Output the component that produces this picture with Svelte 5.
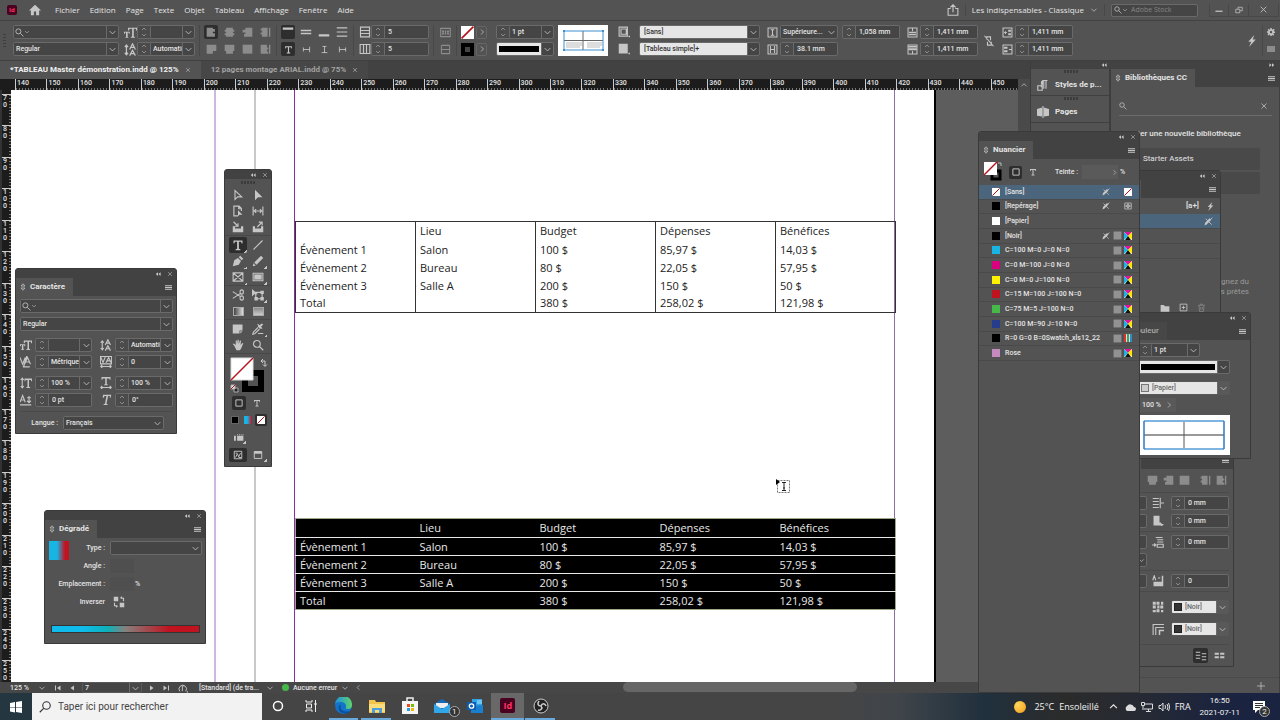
<script lang="ts">
  type Glyph = { f?: string; s?: string };

  const menus = ['Fichier', 'Edition', 'Page', 'Texte', 'Objet', 'Tableau', 'Affichage', 'Fenêtre', 'Aide'];
  const columns = ['', 'Lieu', 'Budget', 'Dépenses', 'Bénéfices'];
  const rows = [
    ['Évènement 1', 'Salon', '100 $', '85,97 $', '14,03 $'],
    ['Évènement 2', 'Bureau', '80 $', '22,05 $', '57,95 $'],
    ['Évènement 3', 'Salle A', '200 $', '150 $', '50 $'],
    ['Total', '', '380 $', '258,02 $', '121,98 $']
  ];
  const hRuler = Array.from({ length: 32 }, (_, i) => 140 + i * 10);
  const vRuler = Array.from({ length: 19 }, (_, i) => 70 + i * 10);

  const swatches = [
    { name: '[Sans]', color: 'none', locked: true, kind: 'none' },
    { name: '[Repérage]', color: '#000', locked: true, kind: 'reg' },
    { name: '[Papier]', color: '#fff', locked: false, kind: '' },
    { name: '[Noir]', color: '#000', locked: true, kind: 'cmyk' },
    { name: 'C=100 M=0 J=0 N=0', color: '#18b4e4', locked: false, kind: 'cmyk' },
    { name: 'C=0 M=100 J=0 N=0', color: '#d8007f', locked: false, kind: 'cmyk' },
    { name: 'C=0 M=0 J=100 N=0', color: '#fff200', locked: false, kind: 'cmyk' },
    { name: 'C=15 M=100 J=100 N=0', color: '#c1121f', locked: false, kind: 'cmyk' },
    { name: 'C=75 M=5 J=100 N=0', color: '#46b749', locked: false, kind: 'cmyk' },
    { name: 'C=100 M=90 J=10 N=0', color: '#263c8c', locked: false, kind: 'cmyk' },
    { name: 'R=0 G=0 B=0Swatch_xls12_22', color: '#000', locked: false, kind: 'rgb' },
    { name: 'Rose', color: '#c48abf', locked: false, kind: 'cmyk' }
  ];

  const toolGroups = [
    ['select', 'direct', 'page', 'gap', 'collect', 'place'],
    ['type', 'line', 'pen', 'pencil', 'frame', 'rect'],
    ['scissors', 'transform', 'gradient', 'feather'],
    ['note', 'dropper', 'hand', 'zoom']
  ];
  // tools that open a flyout carry a small corner mark
  const flyouts = ['type', 'pen', 'pencil', 'frame', 'rect', 'transform', 'dropper'];

  // all glyphs are drawn on a 16 x 16 grid: f = filled, s = stroked
  const glyphs: Record<string, Glyph> = {
    home: { f: 'M8 1 0 8.500h2.500V15h4v-5h3v5h4V8.500H16z' },
    share: { s: 'M5 6H1.500v9h13V6H11M8 11V1M4.500 4.500 8 1l3.500 3.500' },
    down: { s: 'M3 5.500 8 10.500l5-5' },
    up: { s: 'M3 10.500 8 5.500l5 5' },
    right: { s: 'M6 3l5 5-5 5' },
    left: { s: 'M10 3 5 8l5 5' },
    close: { s: 'M3 3l10 10M13 3 3 13' },
    minus: { s: 'M1 10h14M1 11h14' },
    restore: { s: 'M1.500 6.500h8v7h-8zM6 6V2.500h8.500v7H10' },
    collapse: { f: 'M8 3v10L2 8zM15 3v10L9 8z' },
    expand: { f: 'M1 3v10l6-5zM8 3v10l6-5z' },
    menu: { f: 'M0 3h16v2H0zM0 7h16v2H0zM0 11h16v2H0z' },
    updown: { s: 'M4 6 8 1.500 12 6zM4 10l4 4.500 4-4.500z' },
    search: { s: 'M10.500 6a4.500 4.500 0 1 1-9 0 4.500 4.500 0 0 1 9 0M9.500 9.500 15 15' },
    size: { f: 'M5 2h11v3.500h-1L14.500 3.500H12V13l1.500.5v1h-5v-1L10 13V3.500H7L6 5.500H5zM0 7h7v2.500H6L5.500 8H4.500v5.500l1 .5v.500h-4V14l1-.5V8H1.500L1 9.500H0z' },
    leading: { s: 'M3 3v11M1 5l2-2.500L5 5M1 12l2 2.500L5 12M7 8l3.500-7L14 8M8 5.500h5M7 15.500l3.500-6.500 3.500 6.500M8 13h5' },
    kern: { s: 'M0 2l3.500 9L7 2M6 11l4-9 4 9M7.500 8h5M9 0 5 13M4 14.500h9M6 12.500 4 14.500' },
    track: { s: 'M1 1.500l3 7 3-7M8 9l3.500-7L15 9M9.500 6.500h4M0 .500h16M0 10.500h16M.500 0v10M15.500 0v10M1 14h14M3 12l-2 2 2 2M13 12l2 2-2 2' },
    vscale: { s: 'M3 2v12M1 4l2-2.500L5 4M1 12l2 2.500L5 12', f: 'M6 2h10v3.500h-1l-.5-1.500H12v9l1.500.500v1h-5v-1L10 13V4H7.500L7 5.500H6z' },
    hscale: { f: 'M2 0h12v3.500h-1L12.500 2H9v7.500l1.500.5v1h-5v-1L7 9.500V2H3.500L3 3.500H2z', s: 'M1 14h14M3 12l-2 2 2 2M13 12l2 2-2 2' },
    baseline: { s: 'M0 11l3.500-9L7 11M1.500 8h4M0 14.500h15M12 2.500v9M9.500 9l2.500 2.500L14.500 9M9.500 5H14.500' },
    skew: { f: 'M4 1h11l-.8 4H13l.3-2.200H10.800L8.600 13l1.600.5-.2 1.200H4.600l.2-1.200L6.600 13 8.600 2.800H6L5 5H3.600z' },
    al: { f: 'M1 1h9v2h3v4h-3v2h3v5H1z' },
    ac: { f: 'M3 1h10v3h2v3h-2v2h2v3h-2v2H3v-2H1V9h2V7H1V4h2z' },
    ar: { f: 'M5 1h10v13H3v-4h2V8H1V4h4z' },
    ae: { f: 'M1 2h2v3h-2zM3 1h8v13H3v-3H1V8h2zM13 1h2v13h-2z' },
    jl: { f: 'M1 1h14v9h-5v4H1z' },
    jc: { f: 'M1 1h14v9h-2v4H3v-4H1z' },
    jf: { f: 'M1 1h14v13H1z' },
    je: { f: 'M1 1h9v4h2v3h-2v3h2v3H1zM13 1h2v13h-2z' },
    vt: { f: 'M1 2h14v3H1z' },
    vc: { f: 'M1 5h14v2H1zM1 9h14v2H1z' },
    vb: { f: 'M1 11h14v3H1z' },
    vj: { s: 'M1 2.500h14M1 8h14M1 13.500h14' },
    T: { f: 'M2 2h12v4h-1l-1-2.200H9V13l2 .5V15H5v-1.500l2-.5V3.800H4L3 6H2z' },
    tr: { s: 'M13.500 3v10M14 8H2M2.500 4.500v7' },
    tu: { s: 'M3 13.500h10M8 14V2M4.500 2.500h7' },
    tl: { s: 'M2.500 3v10M2 8h12M13.500 4.500v7' },
    rowsI: { s: 'M2 1.500h12v13H2zM2 6h12M2 10h12' },
    colsI: { s: 'M1.500 2h13v12h-13zM6 2v12M10 2v12' },
    merge: { s: 'M1 2h14v12H1zM3 5l3 6M6 5l-3 6M8 5v6M13 5l-3 6M10 5l3 6' },
    unmerge: { s: 'M2 2v12M14 2v12M2 8h12M2 2h12M2 14h12' },
    corner: { s: 'M1.500 1.500h11v12h-11zM4 4h7v7H4z', f: 'M14 13h2v2h-2z' },
    fill: { f: 'M1 1h12v13H1zM14 13h2v2h-2z' },
    rowH: { s: 'M1.500 1.500h13v13h-13zM8 4v8M5.500 4h5M5.500 12h5' },
    colW: { s: 'M1.500 1.500h13v13h-13zM5 3v10M11 3v10M5 8h6' },
    insetT: { s: 'M1.500 1.500h13v13h-13zM8 2v4', f: 'M3 7h10v2H3zM3 10h10v2H3z' },
    insetB: { s: 'M1.500 1.500h13v13h-13zM8 10v4', f: 'M2 3h12v2H2zM2 6h12v3H2z' },
    insetL: { s: 'M1.500 1.500h13v13h-13zM3 8h4M5 6v4', f: 'M9 4h4v3H9zM9 9h4v3H9z' },
    insetR: { s: 'M1.500 1.500h13v13h-13zM10 8h4', f: 'M3 4h5v3H3zM3 9h5v3H3z' },
    unlink: { s: 'M5 6V2.500h5V7M6 9v4.500h5V9M2 1l12 14' },
    bolt: { f: 'M11 0 3 9h4l-3 7 9-10H9z' },
    gear: { f: 'M6.500 0h3v2.500l2 .8 1.800-1.800 2 2L13.500 5.500l.5 1.500h2v3h-2.500l-.8 1.500 1.800 1.800-2 2-2-1.800-1 .5V16h-3v-2.500l-1.500-.5-2 1.800-2-2L2.500 11 2 9.500H0v-3h2.500L3 5 1.500 3.500l2-2 1.800 1.800 1.200-.5zM8 5.500a2.500 2.500 0 1 0 .1 0z' },
    bars: { f: 'M0 2h16v12H0z' },
    first: { f: 'M2 3h2v10H2zM13 3v10L6 8z' },
    prev: { f: 'M12 3v10L5 8z' },
    next: { f: 'M4 3v10l7-5z' },
    last: { f: 'M12 3h2v10h-2zM3 3v10l7-5z' },
    preflight: { s: 'M3 13.500A6 6 0 1 1 12.500 13M7 8V4.500h3M7 8v5', f: 'M14 13h2v2h-2z' },
    para: { s: 'M1 9h6v6H1zM9 2v11M12 2v11M14 2H7', f: 'M8 2a3 3 0 0 0 0 6zM5 7h2v4H5z' },
    pages: { f: 'M0 4l7-2v12l-7-1zM9 2l7 2v9l-7 1z', s: 'M8 0v16' },
    select: { s: 'M4 2v12l3.500-3.500H13z' },
    direct: { f: 'M4 1v14l4-4h6z' },
    page: { s: 'M8 14.500H2.500V1.500h7l3 3V8M9 2v3h3', f: 'M8 7v8l2-2h4z' },
    gap: { s: 'M1.500 2v12M14.500 2v12M3 8h10M5.500 5.500 3 8l2.500 2.500M10.500 5.500 13 8l-2.500 2.500' },
    collect: { f: 'M1 7h3v3h8V7h3v8H1z', s: 'M2 1l6 6M8 3v4H4' },
    place: { f: 'M1 7h3v3h8V7h3v8H1z', s: 'M7 8l6-6M9 1.500h4.500V6' },
    type: { f: 'M2 2h12v4h-1l-1-2.200H9.200V13l2 .5V15H4.800v-1.500l2-.5V3.800H4L3 6H2z' },
    line: { s: 'M2 14 14 2' },
    pen: { f: 'M1 15l2-8 5-3 4 4-3 5zM9 3l2-2 4 4-2 2z' },
    pencil: { f: 'M1 15l1-4 3 3zM3 10 12 1l3 3-9 9z' },
    frame: { s: 'M1.500 2.500h13v11h-13zM2 3l12 10M14 3 2 13' },
    rect: { f: 'M3 4.500h10v7H3z', s: 'M1.500 3h13v10h-13z' },
    scissors: { s: 'M1 3.500l11 7M1 12.500l11-7M11 4a2.200 2 0 1 0 4 0 2.200 2 0 1 0-4 0M11 12a2.200 2 0 1 0 4 0 2.200 2 0 1 0-4 0' },
    transform: { s: 'M5 4.500h8.500v8.500H5zM12 3h3v3h-3zM12 11.500h3v3h-3zM4 11.500h3v3H4z', f: 'M0 0v10l3-3h5z' },
    note: { f: 'M1 2h13v8h-4v4H1zM11 11h3l-3 3z' },
    dropper: { f: 'M8 5l3 3 1-1 1 1 1-1-2-2 3-3-2-1.500-3 2.500-2-2-1 1 1 1z', s: 'M8 6 2 12l-1 3 3-1 6-6M8 14h7' },
    hand: { f: 'M3 9 1 6.500 2.500 6 5 8V2h1.500v5L7.500 1H9v6l1.500-5H12l-.5 6L14 5l1 1-3 7-1.500 2H6z' },
    zoom: { s: 'M11 6.500a4.500 4.500 0 1 1-9 0 4.500 4.500 0 0 1 9 0M10 10l5 5' },
    square: { s: 'M3 3h10v10H3z' },
    nopen: { f: 'M1 15l1-5 8-8 3 3-8 8z', s: 'M3 3l10.500 10.500M11 5l4-4' },
    grid: { f: 'M1 1h14v14H1z' },
    reg: { s: 'M1.500 2h13v12h-13zM1 8h14M8 2v12M5 8a3 3 0 1 0 6 0 3 3 0 1 0-6 0' },
    preview: { f: 'M0 6h3v8H0zM5 6h10v8H5zM5 3h1v2H5zM8 3h1v2H8zM11 3h1v2h-1zM14 3h1v2h-1z' },
    normal: { s: 'M2 2h12v12H2zM4 12l3-6 2 5 3-6M4 5h3M9 12h4' },
    screen: { s: 'M2 2.500h12v11H2z', f: 'M2 2h12v4H2z' },
    folder: { f: 'M1 3h5l2 2h7v9H1z' },
    plusBox: { s: 'M2 2h12v12H2zM8 5v6M5 8h6' },
    trash: { s: 'M2 4h12M6 4V2h4v2M3.500 4l1 11h7l1-11M6.500 7v5M9.500 7v5' },
    indentR: { s: 'M1 2h8M1 6h8M1 10h8M1 14h8M11 1v14M16 8h-4' },
    indentB: { f: 'M2 1h8v9h2v4H2zM12 11l4 2-4 2z' },
    space: { s: 'M5 2h9M7 5h8M7 8h8M7 11h8v4H7zM0 12h5M3 10l2 2-2 2' },
    drop: { f: 'M2 9h13v6H2zM13 1h2v8h-2z', s: 'M1 7l2-6 2 6M8 4h3' },
    shade: { f: 'M1 1h4v4H1zM6 1h4v4H6zM12 1h3v4h-3zM1 6h4v4H1zM7 6h3v4H7zM11 6h4v4h-4zM1 12h4v3H1zM6 11h4v4H6zM12 12h3v3h-3z' },
    borderI: { s: 'M1.500 16V2H16M5 16V6H16', f: 'M9 9h7v2h-5v5H9z' },
    balance: { s: 'M1 3h6M1 7h6M1 11h6M9 5h6M9 9h6M9 13h6' },
    balance2: { f: 'M1 4h6v3H1zM9 4h6v3H9zM1 9h6v3H1zM9 9h6v3H9z' },
    invert: { f: 'M1 1h6v6H1zM9 9h6v6H9z', s: 'M10 3h4v4M10 3l2-2M6 13H2V9M6 13l-2 2' },
    plus: { s: 'M8 0v16M0 8h16' }
  };
</script>

{#snippet icon(name: string, size = 12)}
  <svg class="icon" width={size} height={size} viewBox="0 0 16 16" aria-hidden="true">
    {#if glyphs[name].f}<path class="f" d={glyphs[name].f} />{/if}
    {#if glyphs[name].s}<path class="s" d={glyphs[name].s} />{/if}
  </svg>
{/snippet}

{#snippet slash(size = 12)}
  <svg class="icon" width={size} height={size} viewBox="0 0 24 24" aria-hidden="true">
    <rect width="24" height="24" fill="#fff" /><path d="M1 23 23 1" stroke="#b5121b" stroke-width="3" />
  </svg>
{/snippet}

{#snippet stepper(label: string)}
  <button class="step" aria-label={`Incrémenter ${label}`}>{@render icon('up', 8)}{@render icon('down', 8)}</button>
{/snippet}

{#snippet combo(label: string, value: string, cls = '')}
  <span class={`combo ${cls}`}>
    <select aria-label={label}><option>{value}</option></select>
    <span class="chev">{@render icon('down', 9)}</span>
  </span>
{/snippet}

{#snippet num(label: string, value: string)}
  <span class="num">{@render stepper(label)}<input aria-label={label} {value} /></span>
{/snippet}

{#snippet numCombo(label: string, value: string)}
  <span class="num">{@render stepper(label)}{@render combo(label, value, 'inner')}</span>
{/snippet}

{#snippet fontSearch()}
  <span class="combo font">
    <input aria-label="Police" />
    <span class="lead">{@render icon('search', 9)}{@render icon('down', 6)}</span>
    <span class="chev">{@render icon('down', 9)}</span>
  </span>
{/snippet}

{#snippet strokeLine()}
  <span class="combo light">
    <span class="stroke"><i></i></span>
    <span class="chev">{@render icon('down', 9)}</span>
  </span>
{/snippet}

{#snippet titlebar()}
  <div class="titlebar">
    <button aria-label="Réduire">{@render icon('collapse', 6)}</button>
    <button aria-label="Fermer">{@render icon('close', 6)}</button>
  </div>
{/snippet}

{#snippet panelTab(title: string)}
  <div class="panel-tabs">
    <h2>{@render icon('updown', 8)}{title}</h2>
    <button aria-label={`Menu ${title}`}>{@render icon('menu', 7)}</button>
  </div>
{/snippet}

{#snippet dataTable(cls: string)}
  <table class={cls}>
    <thead>
      <tr>{#each columns as c}<th scope="col">{c}</th>{/each}</tr>
    </thead>
    <tbody>
      {#each rows as row}
        <tr>{#each row as cell}<td>{cell}</td>{/each}</tr>
      {/each}
    </tbody>
  </table>
{/snippet}

<div class="app">
  <header class="menubar">
    <span class="id-logo">Id</span>
    <button class="home" aria-label="Accueil">{@render icon('home')}</button>
    <nav>
      {#each menus as m}<button>{m}</button>{/each}
    </nav>
    <div class="menu-right">
      <button aria-label="Partager">{@render icon('share')}</button>
      <i class="sep"></i>
      <button class="workspace">Les indispensables - Classique {@render icon('down', 8)}</button>
      <i class="sep"></i>
      <label class="stock">{@render icon('search', 8)}{@render icon('down', 6)}<input aria-label="Adobe Stock" placeholder="Adobe Stock" /></label>
      <div class="win">
        <button aria-label="Réduire la fenêtre">{@render icon('minus', 8)}</button>
        <button aria-label="Restaurer">{@render icon('restore', 8)}</button>
        <button aria-label="Quitter">{@render icon('close', 9)}</button>
      </div>
    </div>
  </header>

  <div class="options">
    <i class="grip"></i>
    <div class="two w-font">{@render fontSearch()}{@render combo('Style', 'Regular')}</div>
    <div class="two pair w-size">
      {@render icon('size', 13)}{@render numCombo('Corps', '')}
      {@render icon('leading', 13)}{@render numCombo('Interlignage', 'Automatique')}
    </div>
    <i class="sep"></i>
    <div class="two quad dim">
      {#each ['al', 'ac', 'ar', 'ae', 'jl', 'jc', 'jf', 'je'] as g, i}
        <button class:on={i === 0} aria-label={`Alignement ${i + 1}`}>{@render icon(g, 11)}</button>
      {/each}
    </div>
    <i class="sep"></i>
    <div class="two quad">
      {#each ['vt', 'vc', 'vb', 'vj', 'T', 'tr', 'tu', 'tl'] as g, i}
        <button class:on={i === 0 || i === 4} aria-label={`Cellule ${i + 1}`}>{@render icon(g, i < 4 ? 12 : 9)}</button>
      {/each}
    </div>
    <i class="sep"></i>
    <div class="two pair w-count">
      {@render icon('rowsI', 12)}{@render num('Lignes', '5')}
      {@render icon('colsI', 12)}{@render num('Colonnes', '5')}
    </div>
    <i class="sep"></i>
    <div class="two dim w-icon">{@render icon('merge', 11)}{@render icon('unmerge', 11)}</div>
    <i class="sep"></i>
    <div class="two paint">
      {@render slash(13)}<button aria-label="Fond">{@render icon('right', 8)}</button>
      <i class="stroke-box"></i><button aria-label="Contour">{@render icon('right', 8)}</button>
    </div>
    <i class="sep clear"></i>
    <div class="two w-stroke">{@render numCombo('Épaisseur', '1 pt')}{@render strokeLine()}</div>
    <svg class="proxy" width="50" height="31" viewBox="0 0 50 31" aria-hidden="true">
      <rect width="50" height="31" fill="#fff" />
      <path d="M8 18h16M8 20h16M29 18h15M29 20h15M8 22h14M29 22h13" stroke="#bbb" />
      <path d="M25 6v19M6 15.500h39" stroke="#666" />
      <path d="M6 6h39v19H6z" fill="none" stroke="#3c8fd0" />
      <path d="M5 5h2v2H5zM44 5h2v2h-2zM5 24h2v2H5zM44 24h2v2h-2z" fill="#3c8fd0" />
    </svg>
    <i class="sep clear"></i>
    <div class="two w-icon">{@render icon('corner', 12)}{@render icon('fill', 12)}</div>
    <div class="two w-style">{@render combo('Style de cellule', '[Sans]', 'light')}{@render combo('Style de tableau', '[Tableau simple]+', 'light')}</div>
    <div class="two pair w-cell">
      {@render icon('rowH', 11)}{@render combo('Hauteur', 'Supérieure...', 'flat')}
      {@render icon('colW', 11)}{@render num('Largeur', '38.1 mm')}
    </div>
    <div class="two w-num">{@render num('Hauteur de ligne', '1,058 mm')}</div>
    <div class="two pair w-cell">
      {@render icon('insetT', 11)}{@render num('Marge haut', '1,411 mm')}
      {@render icon('insetB', 11)}{@render num('Marge bas', '1,411 mm')}
    </div>
    <button class="link" aria-label="Lier les marges">{@render icon('unlink', 12)}</button>
    <div class="two pair w-cell">
      {@render icon('insetL', 11)}{@render num('Marge gauche', '1,411 mm')}
      {@render icon('insetR', 11)}{@render num('Marge droite', '1,411 mm')}
    </div>
    <div class="options-end">
      <button aria-label="Actions rapides">{@render icon('bolt')}</button>
      <i class="sep"></i>
      <div class="two">
        <button aria-label="Paramètres">{@render icon('gear', 8)}</button>
        <button class="dim" aria-label="Menu du panneau">{@render icon('bars', 8)}</button>
      </div>
    </div>
  </div>

  <div class="work">
    <main class="doc">
      <div class="doc-tabs">
        <button class="active">*TABLEAU Master démonstration.indd @ 125% {@render icon('close', 6)}</button>
        <button>12 pages montage ARIAL.indd @ 75% {@render icon('close', 6)}</button>
      </div>
      <div class="hruler">
        <div>{#each hRuler as n}<span>{n}</span>{/each}</div>
        <button aria-label="Défiler vers le haut">{@render icon('up', 8)}</button>
      </div>
      <div class="canvas">
        <div class="vruler">
          {#each vRuler as n}<span>{#each String(n).split('') as d}<b>{d}</b>{/each}</span>{/each}
        </div>
        <div class="page">
          <i class="guide bleed"></i>
          <i class="guide edge"></i>
          <div class="frame">
            {@render dataTable('simple')}
            {@render dataTable('inverse')}
          </div>
          <svg class="cursor" width="15" height="16" viewBox="0 0 15 16" aria-hidden="true">
            <path d="M1.500 2.500h12v12h-12z" fill="none" stroke="#777" stroke-dasharray="2 1" />
            <path d="M0 1v6l4-3z" />
            <path d="M6 4.500h4M8 4.500v8M6 12.500h4M7 10h2" stroke="#222" fill="none" />
          </svg>
        </div>
        <div class="board"></div>
        <div class="vscroll"></div>
      </div>
      <footer class="status">
        <button class="zoom">125 % {@render icon('down', 8)}</button>
        <button aria-label="Première page">{@render icon('first', 8)}</button>
        <button aria-label="Page précédente">{@render icon('prev', 8)}</button>
        <span class="page-no">{@render combo('Page', '7')}</span>
        <button aria-label="Page suivante">{@render icon('next', 8)}</button>
        <button aria-label="Dernière page">{@render icon('last', 8)}</button>
        <button class="flight" aria-label="Contrôle en amont">{@render icon('preflight', 10)}</button>
        <button class="profile">[Standard] (de tra... {@render icon('down', 8)}</button>
        <button class="errors"><i></i>Aucune erreur {@render icon('down', 8)}</button>
        <button aria-label="Défiler à gauche">{@render icon('left', 7)}</button>
        <div class="hscroll"><i></i></div>
      </footer>
    </main>

    <aside class="dock">
      <div class="dock-head">
        <span>{@render icon('collapse', 6)}</span><span>{@render icon('expand', 6)}</span>
      </div>
      <div class="dock-body">
        <div class="dock-icons">
          <button><i class="dots"></i>{@render icon('para')}Styles de p...</button>
          <button><i class="dots"></i>{@render icon('pages')}Pages</button>
        </div>
        <section class="library">
          {@render panelTab('Bibliothèques CC')}
          <label class="lib-search">{@render icon('search', 8)}<input aria-label="Rechercher une bibliothèque" />{@render icon('close', 8)}</label>
          <a class="create" href="#library">Créer une nouvelle bibliothèque</a>
          <button class="card">Starter Assets</button>
          <button class="card" aria-label="Bibliothèque"></button>
          <p>Gagnez du<br />ques prêtes</p>
          <div class="lib-foot"><button aria-label="Ajouter">{@render icon('plus', 8)}</button></div>
        </section>
      </div>
    </aside>
  </div>

  <footer class="taskbar">
    <button class="start" aria-label="Démarrer">
      <svg width="12" height="12" viewBox="0 0 12 12" aria-hidden="true"><path d="M0 2l5-1v5H0zM6 1l6-1v6H6zM0 6.500h5v5l-5-1zM6 6.500h6V12l-6-1z" fill="#fff" /></svg>
    </button>
    <label class="search">
      <svg width="12" height="12" viewBox="0 0 16 16" aria-hidden="true"><path d="M15 6a5 5 0 1 1-10 0 5 5 0 0 1 10 0M6.500 9.500 1 15" fill="none" stroke="#333" stroke-width="1.500" /></svg>
      <input aria-label="Recherche Windows" placeholder="Taper ici pour rechercher" />
    </label>
    <div class="apps">
      <button aria-label="Cortana"><svg width="12" height="12" viewBox="0 0 12 12"><circle cx="6" cy="6" r="4.500" fill="none" stroke="#fff" stroke-width="1.500" /></svg></button>
      <button aria-label="Affichage des tâches"><svg width="12" height="12" viewBox="0 0 12 12"><path d="M1 0v2h6V0M1.500 4h5v4h-5zM1 12v-2h6v2M10.500 0v12M9 4h3" fill="none" stroke="#eee" /></svg></button>
      <button class="open" aria-label="Edge">
        <svg width="17" height="17" viewBox="0 0 17 17">
          <defs><linearGradient id="edge" x1="0" x2="1"><stop offset="0" stop-color="#1f8fe0" /><stop offset="1" stop-color="#5fd46a" /></linearGradient></defs>
          <circle cx="8.500" cy="8.500" r="8.500" fill="#1273c9" />
          <path d="M0 7a8.500 8.500 0 0 1 17 1c0 3-2 4.500-5 4-2-.4-1-1.500-1-3 0-5-9-5-11-2z" fill="url(#edge)" />
          <path d="M6 8c-2 4 2 8 9 6-3 4-9 3-11-1-1-3 0-5 2-5z" fill="#0b4fa0" />
        </svg>
      </button>
      <button class="open" aria-label="Explorateur">
        <svg width="16" height="14" viewBox="0 0 16 14"><path d="M0 1h6l1 2h9v11H0z" fill="#f3c34c" /><path d="M0 5h16v8H0z" fill="#fbdc7a" /><path d="M3 14V9h10v5h-3v-3H6v3z" fill="#4d9fdb" /></svg>
      </button>
      <button aria-label="Store">
        <svg width="16" height="17" viewBox="0 0 16 17"><path d="M5 5V1h6v4" fill="none" stroke="#eee" stroke-width="1.500" /><path d="M0 4h16v13H0z" fill="#f5f5f5" /><path d="M5 7h3v3H5z" fill="#e74c25" /><path d="M9 7h3v3H9z" fill="#7fb900" /><path d="M5 11h3v3H5z" fill="#1fa0e8" /><path d="M9 11h3v3H9z" fill="#f8b700" /></svg>
      </button>
      <button class="mail" aria-label="Courrier">
        <svg width="16" height="14" viewBox="0 0 16 14"><path d="M0 5l8-5 8 5v9H0z" fill="#1469b8" /><path d="M2 4h12v5H2z" fill="#eee" /><path d="M0 5l8 5 8-5v9H0z" fill="#30a7ea" /></svg>
        <span class="badge">1</span>
      </button>
      <button aria-label="Outlook">
        <svg width="16" height="14" viewBox="0 0 16 14"><path d="M5 0h10v9H5z" fill="#33a3e6" /><path d="M10 1h5v4h-5z" fill="#6cc5f4" /><path d="M4 7l12-1v8H4z" fill="#1b7fd0" /><path d="M0 3h9v8H0z" fill="#0c5fb0" /><circle cx="4.500" cy="7" r="2.200" fill="none" stroke="#fff" stroke-width="1.300" /></svg>
      </button>
      <button class="open current" aria-label="InDesign"><span class="id-logo big">Id</span></button>
      <button class="open" aria-label="OBS">
        <svg width="16" height="16" viewBox="0 0 16 16"><circle cx="8" cy="8" r="7" fill="#222" stroke="#ccc" /><path d="M8 8c-3 0-4-2-2-5M8 8c1-3 4-3 5 0M8 8c2 2 0 5-3 4" fill="none" stroke="#ccc" stroke-width="1.500" /></svg>
      </button>
    </div>
    <div class="tray">
      <i class="sun"></i>
      <span class="weather">25°C</span><span class="weather">Ensoleillé</span>
      <button aria-label="Icônes cachées">{@render icon('up', 11)}</button>
      <svg width="12" height="8" viewBox="0 0 12 8"><path d="M3 8a3 3 0 0 1 0-5 4 4 0 0 1 7 1 2 2 0 0 1 0 4z" fill="#ddd" /></svg>
      <svg width="12" height="10" viewBox="0 0 12 10"><path d="M3 2h8.500v5H3M5 9.500h5M7.500 7v2M.500 0.500h3v3h-3zM2 4v4" fill="none" stroke="#ddd" /></svg>
      <svg width="12" height="10" viewBox="0 0 12 10"><path d="M1 3.500h2l2-2.500v8L3 6.500H1zM7 3q1 2 0 4M9 2q2 3 0 6M10.500 1q2.500 4 0 8" fill="none" stroke="#ddd" /></svg>
      <span class="kb">FRA</span>
      <time>16:50<br />2021-07-11</time>
      <button class="notif" aria-label="Notifications">
        <svg width="12" height="12" viewBox="0 0 12 12"><path d="M0 0h12v9H5l-3 3V9H0z" fill="#fff" /><path d="M2 2.500h8M2 4.500h8M2 6.500h5" stroke="#333" /></svg>
        <span class="badge">2</span>
      </button>
    </div>
  </footer>

  <section class="window tools">
    {@render titlebar()}
    <i class="dots"></i>
    {#each toolGroups as group}
      <div class="tool-group">
        {#each group as t}
          <button class:on={t === 'type'} class:flyout={flyouts.includes(t)} aria-label={t}>
            {#if t === 'gradient' || t === 'feather'}
              <i class={t}></i>
            {:else}
              {@render icon(t, 12)}
            {/if}
          </button>
        {/each}
      </div>
    {/each}
    <svg class="fill-stroke" width="40" height="40" viewBox="0 0 40 40" aria-hidden="true">
      <path d="M17 18h16v16H17z" fill="none" stroke="#000" stroke-width="6" />
      <path d="M3 3h22v22H3z" fill="#fff" stroke="#ddd" /><path d="M3 25 25 3" stroke="#b5121b" stroke-width="1.500" />
      <path d="M33 6h4v5M35 4l-2 2 2 2M35 9.500l2 2 2-2" fill="none" stroke="#ccc" />
      <path d="M6 33h4v4H6z" fill="#222" stroke="#aaa" /><path d="M3 30h4v4H3z" fill="#eee" stroke="#aaa" /><path d="M3 34l4-4" stroke="#b5121b" />
    </svg>
    <div class="tool-row">
      <button class="on" aria-label="Conteneur">{@render icon('square', 10)}</button>
      <button aria-label="Texte">{@render icon('T', 8)}</button>
    </div>
    <div class="tool-row apply">
      <button aria-label="Couleur"><i class="black"></i></button>
      <button aria-label="Dégradé"><i class="ramp"></i></button>
      <button class="on" aria-label="Sans">{@render slash(8)}</button>
    </div>
    <div class="tool-row single"><button class="flyout" aria-label="Mode">{@render icon('preview', 10)}</button></div>
    <div class="tool-row wide">
      <button class="on" aria-label="Normal">{@render icon('normal', 10)}</button>
      <button class="flyout" aria-label="Aperçu">{@render icon('screen', 10)}</button>
    </div>
  </section>

  <section class="window character">
    {@render titlebar()}
    {@render panelTab('Caractère')}
    <div class="body">
      {@render fontSearch()}
      {@render combo('Style de police', 'Regular')}
      <div class="metrics">
        {@render icon('size', 12)}{@render numCombo('Corps du texte', '')}
        {@render icon('leading', 12)}{@render numCombo('Interligne', 'Automatique')}
        {@render icon('kern', 12)}{@render numCombo('Crénage', 'Métrique')}
        {@render icon('track', 12)}{@render numCombo('Approche', '0')}
      </div>
      <div class="metrics">
        {@render icon('vscale', 12)}{@render numCombo('Échelle verticale', '100 %')}
        {@render icon('hscale', 12)}{@render numCombo('Échelle horizontale', '100 %')}
        {@render icon('baseline', 12)}{@render num('Décalage vertical', '0 pt')}
        {@render icon('skew', 12)}{@render num('Inclinaison', '0°')}
      </div>
      <label class="lang"><span>Langue :</span>{@render combo('Langue', 'Français', 'flat')}</label>
    </div>
  </section>

  <section class="window gradient-panel">
    {@render titlebar()}
    {@render panelTab('Dégradé')}
    <div class="body">
      <i class="preview"></i>
      <label for="gtype">Type :</label>
      <span class="combo flat"><select id="gtype"><option></option></select><span class="chev">{@render icon('down', 9)}</span></span>
      <label for="gangle">Angle :</label>
      <input id="gangle" disabled />
      <label for="gpos">Emplacement :</label>
      <span class="pos"><input id="gpos" disabled />%</span>
      <span class="lbl">Inverser</span>
      <button aria-label="Inverser">{@render icon('invert', 12)}</button>
      <i class="slider"></i>
    </div>
  </section>

  <section class="window styles">
    {@render titlebar()}
    <div class="panel-tabs"><h2></h2><button aria-label="Menu des styles">{@render icon('menu', 7)}</button></div>
    <div class="style-tools"><span>[a+]</span>{@render icon('bolt', 9)}</div>
    <div class="style-row on">{@render icon('nopen', 9)}</div>
    <div class="style-row"></div>
    <div class="style-row"></div>
    <div class="style-foot">{@render icon('folder', 10)}{@render icon('plusBox', 9)}{@render icon('trash', 9)}</div>
  </section>

  <section class="window paragraph">
    {@render titlebar()}
    <div class="panel-tabs"><h2></h2><button aria-label="Menu Paragraphe">{@render icon('menu', 7)}</button></div>
    <div class="body">
      <div class="para-align">
        {#each ['jc', 'ar', 'jf', 'ae', 'je'] as g, i}
          <button aria-label={`Justification ${i + 1}`}>{@render icon(g, 11)}</button>
        {/each}
      </div>
      <div class="para-rows">
        <i class="box"></i>{@render icon('indentR', 12)}{@render num('Retrait à droite', '0 mm')}
        <i class="box"></i>{@render icon('indentB', 12)}{@render num('Retrait dernière ligne', '0 mm')}
      </div>
      <div class="para-rows">
        <i class="box"></i>{@render icon('space', 12)}{@render num('Espace après', '0 mm')}
        <i class="box">{@render icon('down', 7)}</i>
      </div>
      <div class="para-rows">
        <i class="box"></i>{@render icon('drop', 12)}{@render num('Lettrine', '0')}
      </div>
      <div class="para-rows colors">
        <i></i>{@render icon('shade', 12)}<span class="pick"><i class="chip"></i>{@render combo('Ombrage', '[Noir]', 'light off')}</span>
        <i></i>{@render icon('borderI', 12)}<span class="pick"><i class="chip"></i>{@render combo('Bordure', '[Noir]', 'light off')}</span>
      </div>
      <div class="para-foot">
        <button class="on" aria-label="Colonnes équilibrées">{@render icon('balance', 12)}</button>
        <button aria-label="Colonnes">{@render icon('balance2', 11)}</button>
      </div>
    </div>
  </section>

  <section class="window stroke-panel">
    {@render titlebar()}
    <div class="panel-tabs"><h2 class="dimmed">Couleur</h2><button aria-label="Menu Contour">{@render icon('menu', 7)}</button></div>
    <div class="body">
      <span class="weight">{@render numCombo('Épaisseur du contour', '1 pt')}</span>
      {@render strokeLine()}
      <span class="pick"><i class="chip paper"></i>{@render combo('Couleur du contour', '[Papier]', 'light off')}</span>
      <span class="tint">100 % {@render icon('right', 8)}</span>
      <svg width="92" height="40" viewBox="0 0 92 40" aria-hidden="true">
        <rect width="92" height="40" fill="#fff" />
        <path d="M6 20h80" stroke="#999" stroke-width="2" /><path d="M46 6v28" stroke="#555" />
        <path d="M6 6h80M6 34h80" stroke="#7fb3e0" stroke-width="2" /><path d="M6 6v28M86 6v28" stroke="#2f79c2" stroke-width="1.500" />
      </svg>
    </div>
  </section>

  <section class="window nuancier">
    {@render titlebar()}
    {@render panelTab('Nuancier')}
    <div class="tint-row">
      <svg width="22" height="22" viewBox="0 0 22 22" aria-hidden="true">
        <path d="M9 10h8v8H9z" fill="none" stroke="#000" stroke-width="3" />
        <path d="M1 1h13v13H1z" fill="#fff" /><path d="M1 14 14 1" stroke="#b5121b" stroke-width="1.500" />
        <path d="M15 2h3v3" fill="none" stroke="#bbb" />
      </svg>
      <button class="on" aria-label="Appliquer au conteneur">{@render icon('square', 10)}</button>
      <button aria-label="Appliquer au texte">{@render icon('T', 8)}</button>
      <label for="tint">Teinte :</label>
      <span class="tint-box"><input id="tint" disabled />{@render icon('right', 7)}</span>%
    </div>
    <ul>
      {#each swatches as s, i}
        <li class:on={i === 0}>
          {#if s.color === 'none'}{@render slash(8)}{:else}<i class="chip" style:background={s.color}></i>{/if}
          <span class="name">{s.name}</span>
          <span>{#if s.locked}{@render icon('nopen', 8)}{/if}</span>
          <span class="gray">{#if s.kind === 'cmyk' || s.kind === 'rgb'}{@render icon('grid', 9)}{/if}</span>
          {#if s.kind === 'none'}
            {@render slash(8)}
          {:else if s.kind === 'reg'}
            {@render icon('reg', 8)}
          {:else if s.kind === 'cmyk'}
            <svg width="8" height="8" viewBox="0 0 8 8" aria-hidden="true"><path d="M0 0h8v8H0z" fill="#fff" /><path d="M0 0h8L4 4z" fill="#e012a0" /><path d="M0 0v8l4-4z" fill="#18b4e4" /><path d="M8 0v8L4 4z" fill="#ffe800" /><path d="M1 8h6L4 4z" fill="#111" /></svg>
          {:else if s.kind === 'rgb'}
            <svg width="8" height="8" viewBox="0 0 8 8" aria-hidden="true"><path d="M0 0h8v8H0z" fill="#ddd" /><path d="M0 0h2v8H0z" fill="#d33" /><path d="M3 0h2v8H3z" fill="#3a5" /><path d="M6 0h2v8H6z" fill="#38c" /></svg>
          {/if}
        </li>
      {/each}
    </ul>
  </section>
</div>

<style>
  :global(body) { margin: 0; background: #535353; }
  .app { position: relative; display: flex; flex-direction: column; height: 100vh; overflow: hidden; background: #535353; color: #e4e4e4; font: 500 7px/10px Roboto, "Open Sans", sans-serif; }
  .app * { box-sizing: border-box; }
  button { display: flex; align-items: center; justify-content: center; padding: 0; border: 0; background: none; color: inherit; font: inherit; white-space: nowrap; }
  input, select { min-width: 0; width: 100%; height: 100%; padding: 0 3px; border: 0; border-radius: 0; background: #454545; color: inherit; font: inherit; appearance: none; outline: 0; }
  i { display: block; font-style: normal; }
  svg { display: block; flex: none; }
  .icon { color: #c6c6c6; }
  .icon .f { fill: currentColor; }
  .icon .s { fill: none; stroke: currentColor; stroke-width: 1.5; }
  h2 { margin: 0; font: inherit; }

  .on { background: #2e2e2e; border-radius: 2px; }
  .sep { flex: none; width: 1px; align-self: stretch; background: #484848; }
  .sep.clear { background: none; }
  .dots { width: 14px; height: 3px; background: repeating-linear-gradient(to right, #3c3c3c 0 2px, transparent 2px 3px); }
  .flyout { background: linear-gradient(135deg, transparent 50%, #c6c6c6 50%) bottom right / 3px 3px no-repeat; }
  .on.flyout { background-color: #2e2e2e; }

  .combo { display: grid; grid-template-columns: minmax(0, 1fr) 12px; height: 14px; border: 1px solid #6a6a6a; border-radius: 2px; background: #454545; overflow: hidden; }
  .combo > select, .combo > input { grid-area: 1 / 1 / 2 / 2; padding: 0 0 0 2px; }
  .chev { display: grid; place-items: center; border-left: 1px solid #6a6a6a; }
  .lead { grid-area: 1 / 1; justify-self: start; display: flex; align-items: center; padding-left: 1px; }
  .combo.flat .chev { border: 0; }
  .combo.inner { height: 12px; border: 0; }
  .combo.light > select, .stroke { background: #e6e6e6; color: #333; padding: 0 4px; }
  .combo.off { border-color: #595959; background: #595959; }
  .combo.off > select { color: #666; }
  .combo .stroke { display: flex; align-items: center; padding: 0 2px; }
  .stroke i { width: 100%; height: 6px; background: #000; }
  .num { display: grid; grid-template-columns: 12px minmax(0, 1fr); height: 14px; border: 1px solid #6a6a6a; border-radius: 2px; overflow: hidden; }
  .num > :last-child { border-left: 1px solid #6a6a6a; }
  .step { flex-direction: column; background: #4b4b4b; }
  .step .icon { height: 6px; }

  .menubar { display: flex; align-items: center; height: 20px; padding: 0 1px 0 7px; font-family: "Open Sans", sans-serif; font-size: 8px; font-weight: 400; }
  .id-logo { width: 10px; height: 10px; border-radius: 2px; background: #49021f; color: #ff3366; font: 700 6px/10px "Open Sans", sans-serif; text-align: center; }
  .id-logo.big { width: 15px; height: 15px; font-size: 9px; line-height: 15px; }
  .home { margin: 0 14px 0 12px; }
  .menubar nav { display: flex; gap: 10px; }
  .menu-right { display: flex; align-items: center; gap: 6px; margin-left: auto; height: 16px; }
  .menu-right > .sep { margin: 2px 0; }
  .workspace { gap: 6px; }
  .stock { display: flex; align-items: center; width: 87px; height: 13px; padding: 0 2px; border: 1px solid #6a6a6a; border-radius: 2px; background: #454545; }
  .stock input { height: 10px; background: none; font-size: 7px; }
  .stock input::placeholder { color: #858585; opacity: 1; }
  .win { display: grid; grid-template-columns: 18px 20px 30px; height: 13px; margin-left: 5px; border: 1px solid #484848; border-top: 0; }
  .win button + button { border-left: 1px solid #484848; }

  .options { display: flex; gap: 4px; align-items: flex-start; height: 41px; padding: 4px 5px 0 3px; border-top: 1px solid #424242; border-bottom: 1px solid #404040; }
  .options > .sep { height: 31px; }
  .grip { flex: none; width: 3px; height: 13px; margin: 9px 3px 0 0; background: repeating-linear-gradient(#3e3e3e 0 1px, transparent 1px 3px); }
  .two { display: grid; flex: none; grid-template-rows: 14px 14px; gap: 3px 0; align-items: center; }
  .two > .icon { justify-self: center; }
  .pair { grid-template-columns: 1fr 58px; }
  .w-font { width: 106px; }
  .w-size { width: 72px; }
  .w-count { width: 71px; }
  .w-icon { width: 14px; }
  .w-stroke { width: 58px; }
  .w-style { width: 125px; padding-left: 4px; }
  .w-cell { width: 74px; }
  .w-num { width: 58px; }
  .quad { grid-template-columns: repeat(4, 14px); column-gap: 4px; }
  .quad button { height: 14px; }
  .dim .icon { color: #8c8c8c; }
  .paint { grid-template-columns: 13px 11px; column-gap: 2px; }
  .paint button { height: 13px; border: 1px solid #666; border-radius: 2px; }
  .stroke-box { width: 13px; height: 13px; border: 4px solid #000; background: #444; }
  .link { height: 31px; width: 13px; }
  .options-end { display: flex; gap: 4px; height: 31px; margin-left: auto; }

  .work { display: flex; flex: 1; min-height: 0; }
  .doc { display: flex; flex: 1; flex-direction: column; min-width: 0; }
  .doc-tabs { display: flex; flex: none; height: 18px; background: #424242; font-size: 8px; font-weight: 700; }
  .doc-tabs button { gap: 6px; padding: 0 10px; background: #474747; color: #a2a2a2; }
  .doc-tabs .active { background: #535353; color: #f0f0f0; }
  .hruler { display: flex; flex: none; height: 11px; background: #1c1c1c; overflow: hidden; }
  .hruler div { display: flex; flex: 1; margin-left: 15px; margin-right: -4px; }
  .hruler span { flex: 1; height: 11px; padding-left: 1px; border-left: 1px solid #ccc; background: repeating-linear-gradient(to right, #777 0 1px, transparent 1px 10%) bottom / 100% 2px no-repeat; line-height: 8px; }
  .hruler button { position: relative; width: 12px; background: #4a4a4a; }
  .canvas { display: flex; flex: 1; min-height: 0; }
  .vruler { display: flex; flex: none; flex-direction: column; width: 11px; padding-top: 4px; background: #1c1c1c; overflow: hidden; border-left: 2px solid #333; }
  .vruler span { flex: 0 0 calc((100% + 10px) / 19); border-top: 1px solid #ccc; background: repeating-linear-gradient(#777 0 1px, transparent 1px 10%) right / 2px 100% no-repeat; }
  .vruler b { display: block; padding-left: 1px; font-weight: 500; line-height: 7px; }
  .page { position: relative; flex: 0 1 925px; border-right: 2px solid #000; background: #fff; color: #222; overflow: hidden; }
  .guide { position: absolute; top: 0; bottom: 0; width: 2px; }
  .bleed { left: 203px; background: #cfb8e0; }
  .edge { left: 243px; background: #c8c8c8; }
  .frame { height: 100%; width: 601px; margin-left: 283px; padding-top: 131px; border-left: 1px solid #8a2cab; border-right: 1px solid #8e6fa5; }
  .cursor { position: absolute; left: 765px; top: 388px; }
  .board { flex: 1; background: #5d5d5d; }
  .vscroll { width: 12px; background: #4a4a4a; }

  table { width: 601px; border-collapse: collapse; table-layout: fixed; font: 400 11px/16px "Open Sans", "Noto Sans", sans-serif; }
  th, td { height: 18px; padding: 0 4px; font-weight: 400; text-align: left; }
  th { height: 19px; }
  .simple { border: 1px solid #333; }
  .simple th, .simple td { border-left: 1px solid #333; }
  .inverse { margin-top: 205px; background: #000; color: #e8e8e8; border: 1px solid #9aa888; }
  .inverse tbody tr { border-top: 1px solid #e8e8e8; }

  .status { display: flex; flex: none; align-items: center; gap: 6px; height: 11px; padding-left: 10px; background: #474747; }
  .zoom { width: 36px; justify-content: space-between; margin-right: 2px; }
  .page-no { width: 60px; }
  .page-no .combo { height: 11px; background: none; border-color: #5a5a5a; }
  .flight { margin-left: 2px; }
  .profile { gap: 7px; margin-left: 5px; }
  .errors { gap: 4px; margin-left: 2px; }
  .errors i { width: 7px; height: 7px; border-radius: 50%; background: #46b749; }
  .hscroll { flex: 1; align-self: stretch; padding-left: 255px; }
  .hscroll i { width: 234px; height: 10px; border-radius: 5px; background: #666; }

  .dock { display: flex; flex-direction: column; width: 250px; border-left: 1px solid #3c3c3c; }
  .dock-head { display: flex; flex: none; height: 8px; background: #424242; align-items: center; }
  .dock-head span { display: flex; justify-content: flex-end; width: 76px; }
  .dock-head span + span { flex: 1; padding-right: 5px; }
  .dock-body { display: flex; flex: 1; }
  .dock-icons { width: 80px; border-right: 2px solid #3e3e3e; }
  .dock-icons button { display: grid; grid-template: 5px 1fr / 20px 1fr; gap: 0 2px; align-items: center; justify-items: start; width: 100%; height: 27px; padding-left: 2px; border-bottom: 1px solid #404040; font-size: 8px; font-weight: 700; }
  .dock-icons .dots { grid-column: 1 / 3; justify-self: center; }
  .dock-icons .icon { justify-self: center; }
  .library { display: flex; flex: 1; flex-direction: column; font-size: 8px; border-right: 1px solid #404040; }
  .lib-search { display: flex; align-items: center; height: 20px; margin: 9px 7px 0 8px; padding-right: 4px; border-bottom: 1px solid #6a6a6a; }
  .lib-search input { background: none; }
  .create { margin: 13px 0 9px 17px; color: inherit; text-decoration: none; }
  .card { justify-content: flex-start; height: 22px; margin: 0 19px 2px 8px; padding-left: 24px; border-radius: 2px; background: #494949; font-weight: 400; }
  .library p { margin: 81px 30px 0 auto; color: #999; text-align: right; font-weight: 400; }
  .lib-foot { display: flex; justify-content: flex-end; height: 16px; margin-top: auto; padding-right: 14px; border-top: 1px solid #4a4a4a; }

  .titlebar { display: flex; justify-content: flex-end; align-items: center; gap: 6px; height: 9px; padding-right: 3px; background: #424242; }
  .panel-tabs { display: flex; justify-content: space-between; height: 18px; background: #424242; padding-right: 4px; font-size: 8px; font-weight: 700; }
  .panel-tabs h2 { display: flex; align-items: center; gap: 3px; padding: 0 8px 0 3px; background: #535353; }
  .panel-tabs .dimmed { padding-left: 1px; background: #474747; color: #aaa; font-weight: 500; }
  .window { position: absolute; border: 1px solid #3a3a3a; border-radius: 3px 3px 0 0; background: #535353; overflow: hidden; }

  .tools { left: 224px; top: 169px; width: 48px; padding-bottom: 1px; }
  .tools > .dots { margin: 2px auto 3px; }
  .tool-group { display: grid; grid-template-columns: 18px 18px; justify-content: center; column-gap: 2px; margin-bottom: 1px; border-bottom: 1px solid #484848; }
  .tool-group button { height: 16px; }
  .gradient, .feather { width: 11px; height: 9px; border: 1px solid #aaa; background: linear-gradient(to right, #444, #ddd); }
  .feather { background: linear-gradient(#888, #ccc); }
  .fill-stroke { margin: 0 3px 1px; }
  .tool-row { display: flex; justify-content: center; gap: 4px; height: 17px; }
  .tool-row button { width: 14px; height: 14px; }
  .apply { gap: 1px; }
  .apply button { width: 12px; height: 12px; margin-top: 1px; }
  .black { width: 8px; height: 8px; background: #000; border: 1px solid #666; }
  .ramp { width: 8px; height: 8px; background: linear-gradient(to right, #18b4e4 40%, #c1121f); }
  .tool-row.single { justify-content: flex-start; height: 18px; padding-left: 7px; }
  .wide { gap: 2px; }
  .wide button { width: 18px; }

  .character { left: 15px; top: 268px; width: 162px; }
  .character .body { display: grid; gap: 4px; padding: 3px 3px 3px 4px; }
  .metrics { display: grid; grid-template-columns: 12px 57px 1fr 58px; gap: 3px 3px; align-items: center; margin-top: 3px; }
  .metrics .icon { justify-self: end; }
  .metrics .step .icon { justify-self: center; }
  .metrics + .lang { border-top: 1px solid #4a4a4a; }
  .lang { display: grid; grid-template-columns: 38px 101px; gap: 5px; align-items: center; padding-top: 4px; text-align: right; }

  .gradient-panel { left: 44px; top: 510px; width: 162px; }
  .gradient-panel .body { display: grid; grid-template: repeat(4, 14px) auto / 20px 1fr 92px; gap: 4px 5px; align-items: center; padding: 3px 3px 10px 4px; }
  .gradient-panel label, .lbl { grid-column: 2; text-align: right; }
  .gradient-panel .preview { grid-area: 1 / 1 / 3 / 2; align-self: start; height: 19px; background: linear-gradient(to right, #18b4e4 40%, #c1121f 80%); }
  .gradient-panel label[for='gtype'] { grid-row: 1; }
  .gradient-panel label[for='gpos'] { margin-left: -20px; }
  .gradient-panel input { width: 24px; height: 14px; background: #4f4f4f; }
  .gradient-panel .pos { display: flex; align-items: center; gap: 1px; }
  .gradient-panel .body > button { justify-self: start; padding-left: 3px; }
  .gradient-panel .slider { grid-column: 1 / 4; height: 8px; margin: 12px 2px 0; border: 1px solid #333; background: linear-gradient(to right, #10bcec 20%, #0eb0b8 38%, #86807c 50%, #c1121f 80%); }

  .styles { right: 59px; top: 170px; width: 92px; height: 160px; }
  .style-tools { display: flex; justify-content: flex-end; align-items: center; gap: 7px; height: 16px; padding-right: 5px; font-size: 8px; }
  .style-row { display: flex; align-items: center; justify-content: flex-end; height: 15px; padding-right: 7px; border-bottom: 1px solid #4a4a4a; border-radius: 0; }
  .style-row.on, li.on { background: #4b667c; border-radius: 0; }
  .style-foot { display: flex; justify-content: flex-end; gap: 9px; margin-top: 44px; padding-right: 14px; }
  .style-foot .icon:last-child { color: #858585; }

  .paragraph { right: 46px; top: 441px; width: 105px; }
  .paragraph .body { padding: 0 4px 3px 0; }
  .para-align { display: flex; justify-content: flex-end; gap: 5px; height: 23px; padding-right: 2px; }
  .para-align .icon { color: #8c8c8c; }
  .para-align button:nth-child(4) { margin-left: 5px; }
  .para-rows { display: grid; grid-template-columns: 18px 14px 58px; gap: 4px 5px; justify-content: end; align-items: center; padding: 3px 0; border-top: 1px solid #4a4a4a; }
  .box { height: 14px; border: 1px solid #6a6a6a; border-radius: 2px; background: #454545; }
  .box .icon { margin: 3px 1px 0 auto; }
  .pick { display: grid; }
  .pick > * { grid-area: 1 / 1; }
  .pick .combo > select { padding-left: 13px; }
  .pick .chip { z-index: 1; align-self: center; margin-left: 3px; border: 1px solid #222; background: #333; }
  .pick .chip.paper { background: #ccc; border-color: #777; }
  .para-rows.colors { row-gap: 8px; padding: 8px 0; }
  .para-foot { display: flex; justify-content: flex-end; gap: 4px; padding: 3px 2px 0 0; border-top: 1px solid #4a4a4a; }
  .para-foot button { width: 15px; height: 15px; }

  .stroke-panel { right: 29px; top: 312px; width: 122px; }
  .stroke-panel .body { display: grid; gap: 3px; padding: 3px 20px 3px 8px; }
  .weight { width: 62px; }
  .stroke-panel .pick { margin-top: 4px; }
  .tint { display: flex; align-items: center; justify-content: space-between; width: 38px; height: 14px; padding: 0 3px 0 4px; background: #595959; }

  .nuancier { right: 140px; top: 131px; bottom: 27px; width: 162px; }
  .tint-row { display: flex; align-items: center; height: 26px; padding-left: 4px; }
  .tint-row button { width: 13px; height: 13px; margin-left: 4px; }
  .tint-row label { margin: 0 4px 0 16px; }
  .tint-box { display: flex; align-items: center; width: 36px; height: 14px; margin-right: 2px; background: #5a5a5a; }
  .tint-box input { background: none; }
  .nuancier ul { display: grid; grid-auto-rows: 1fr; height: 176px; margin: 0; padding: 0; list-style: none; }
  .nuancier li { display: grid; grid-template-columns: 8px 1fr 9px 9px 8px; align-items: center; column-gap: 2px; padding: 0 10px 0 13px; border-bottom: 1px solid #4a4a4a; }
  .name { padding-left: 3px; white-space: nowrap; }
  .chip { width: 8px; height: 8px; }
  .gray .icon { color: #929292; }

  .taskbar { display: flex; flex: none; height: 27px; background: linear-gradient(to right, #454545 65%, #40454a 70%, #20303d 77%, #2b2b2b 83%, #262a33 89%, #1a2340 96%); font-size: 9px; font-weight: 400; color: #f2f2f2; }
  .taskbar .icon { color: #eee; }
  .start { width: 32px; background: #24363f; }
  .search { display: flex; align-items: center; gap: 4px; width: 230px; padding-left: 7px; background: #f2f2f2; }
  .search input { background: none; font-size: 10px; }
  .search input::placeholder { color: #444; opacity: 1; }
  .apps { display: flex; width: 295px; }
  .apps button { flex: 1; border-bottom: 2px solid transparent; }
  .apps .open { border-image: linear-gradient(to right, transparent 3px, #6aa9dc 3px 29px, transparent 29px) 2; }
  .apps .current { background: #686868; border-image: none; border-bottom-color: #6aa9dc; }
  .mail, .notif { position: relative; }
  .badge { position: absolute; right: -1px; bottom: 1px; width: 11px; height: 11px; border: 1px solid #aaa; border-radius: 50%; background: #333; font-size: 8px; line-height: 9px; text-align: center; }
  .tray { display: flex; align-items: center; gap: 5px; margin-left: auto; padding-right: 15px; }
  .weather, .kb { font-family: "Open Sans", sans-serif; }
  .sun { width: 12px; height: 12px; margin-right: 3px; border-radius: 50%; background: radial-gradient(circle at 30% 30%, #ffd85a, #f59a1c); }
  .tray > button:not(.notif) { margin-left: 4px; }
  .tray time { margin: 0 8px 0 4px; font-size: 8px; line-height: 12px; text-align: center; }
  .notif { height: 27px; }
  .notif .badge { right: -5px; bottom: 3px; }
</style>
